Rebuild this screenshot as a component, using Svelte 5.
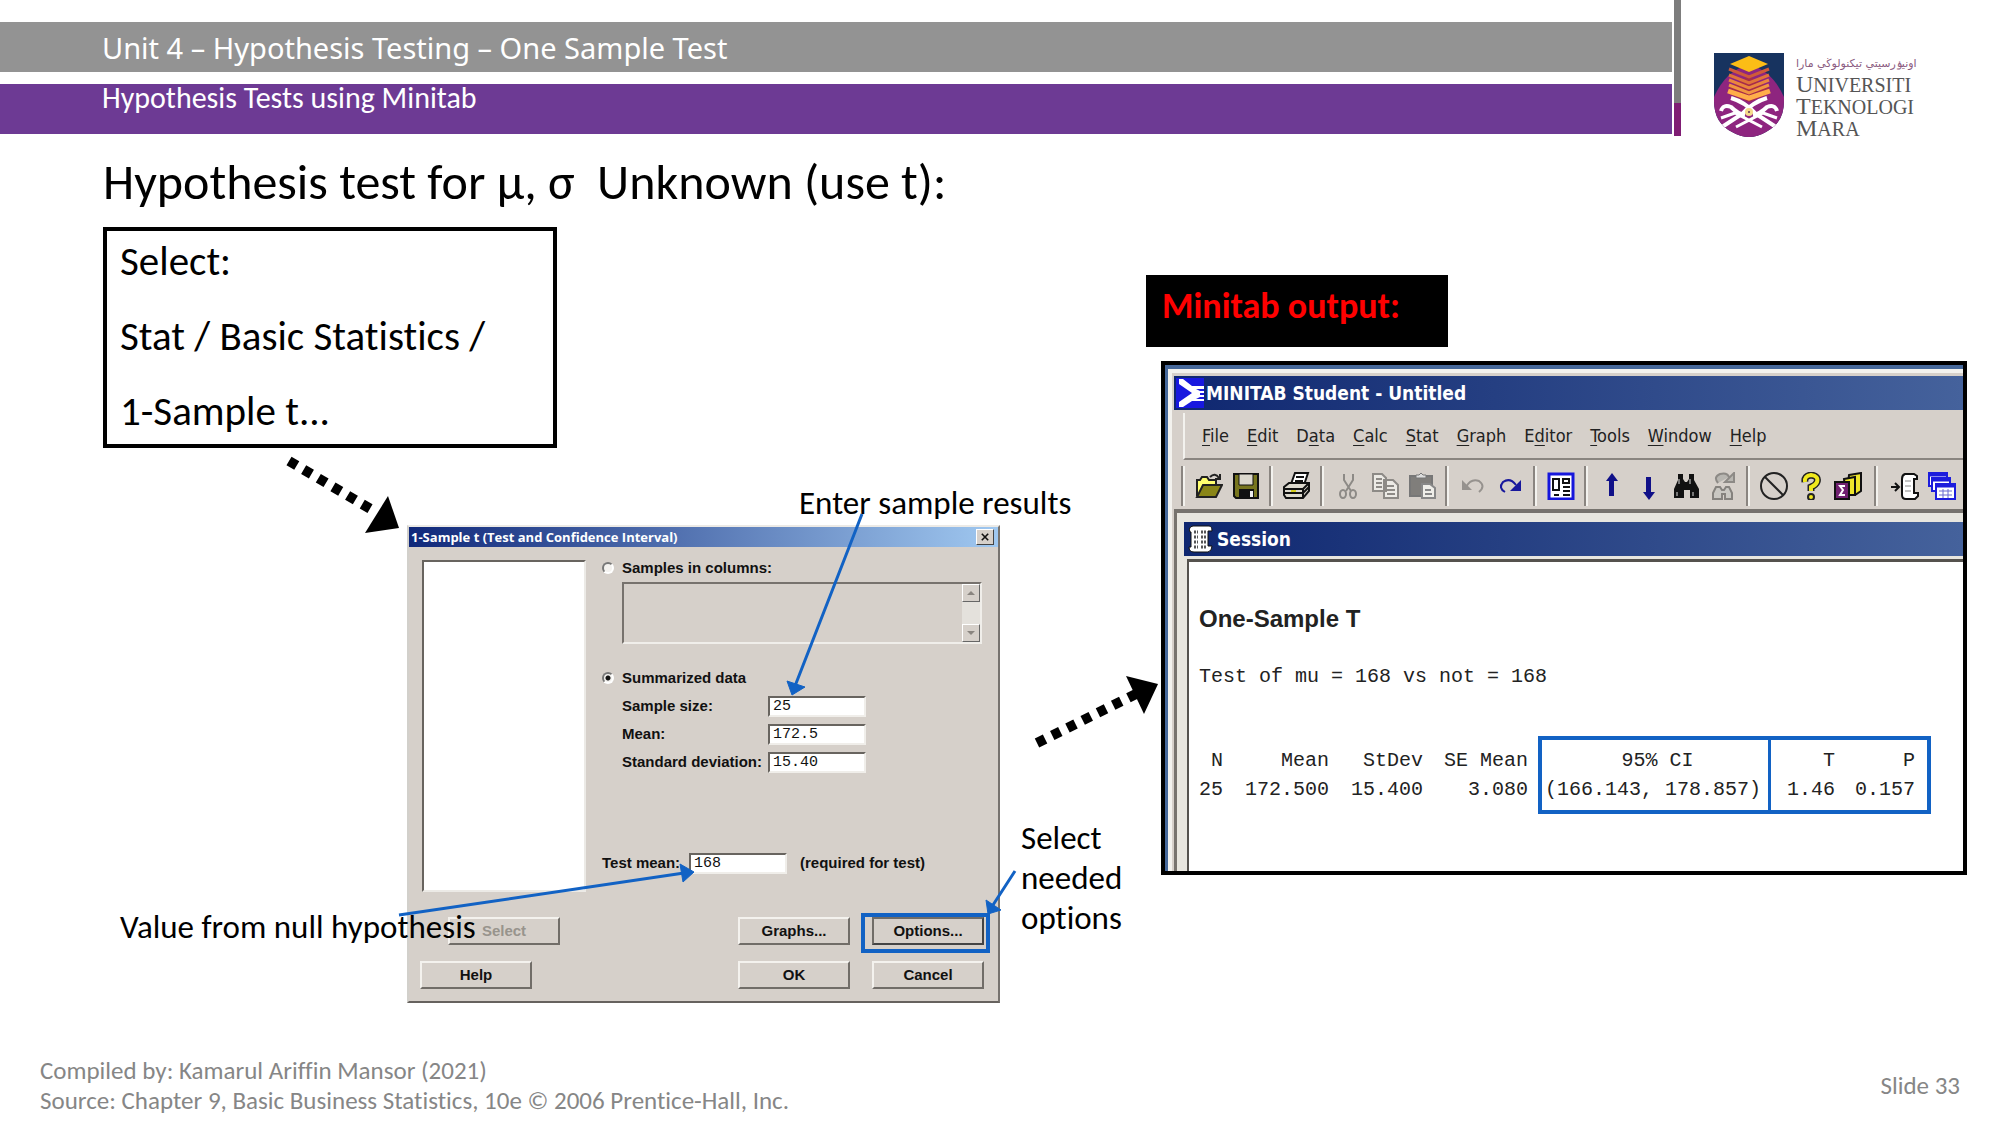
<script>
  const menus = [
    ['', 'F', 'ile'], ['', 'E', 'dit'], ['D', 'a', 'ta'], ['', 'C', 'alc'], ['', 'S', 'tat'],
    ['', 'G', 'raph'], ['E', 'd', 'itor'], ['', 'T', 'ools'], ['', 'W', 'indow'], ['', 'H', 'elp']
  ];
  const groups = [
    ['open', 'save'], ['print'], ['cut', 'copy', 'paste'], ['undo', 'redo'], ['project'],
    ['previous', 'next', 'find', 'replace'], ['cancel', 'help', 'guide'], ['session', 'worksheets']
  ];
  let mode = $state('summary');
  let size = $state('25');
  let mean = $state('172.5');
  let deviation = $state('15.40');
  let testMean = $state('168');
</script>

{#snippet icon(name)}
  <svg class="icon" viewBox="0 0 28 28" aria-hidden="true">
    {#if name === 'open'}
      <path d="M2 24V8h3l2-3h5l2 3h7v5" fill="#ffff70" stroke="#222" stroke-width="2" />
      <path d="M2 25l6-12h19l-6 12z" fill="#8a8618" stroke="#222" stroke-width="2" />
      <path d="M15 5q5-5 9 1M25 2v5h-5" fill="none" stroke="#222" stroke-width="2" />
    {:else if name === 'save'}
      <path d="M2 2h24v24H4l-2-2z" fill="#77751d" stroke="#111" stroke-width="2" />
      <path d="M7 2h14v11H7z" fill="#ddd9ce" stroke="#111" />
      <path d="M7 17h15v9H7z" fill="#111" />
      <path d="M18 19h3v6h-3z" fill="#eee" />
    {:else if name === 'print'}
      <path d="M8 12l4-11h13l-4 12" fill="#fff" stroke="#111" stroke-width="2" />
      <path d="M13 5h8M12 9h8" stroke="#111" stroke-width="2" />
      <path d="M1 15l5-4h20v8l-6 7H3l-2-3z" fill="#ddd9ce" stroke="#111" stroke-width="2" />
      <path d="M2 17h18l5-5M2 21h18l6-6M20 17v9" fill="none" stroke="#111" stroke-width="2" />
      <path d="M8 19h5" stroke="#d5cf20" stroke-width="2" />
    {:else if name === 'cut'}
      <path d="M10 2v6l7 11M19 2v6l-7 11" fill="none" stroke="#8d8a86" stroke-width="2" />
      <ellipse cx="9" cy="22" rx="3" ry="4" fill="none" stroke="#8d8a86" stroke-width="2" />
      <ellipse cx="19" cy="22" rx="3" ry="4" fill="none" stroke="#8d8a86" stroke-width="2" />
    {:else if name === 'copy'}
      <path d="M2 2h9l4 4v13H2zM13 8h9l5 5v13H13z" fill="#eceae5" stroke="#8d8a86" stroke-width="2" />
      <path d="M5 7h6M5 11h6M5 15h6M16 14h7M16 18h8M16 22h8" stroke="#8d8a86" stroke-width="2" />
    {:else if name === 'paste'}
      <path d="M2 4h22v20H2z" fill="#807e7b" stroke="#777" stroke-width="2" />
      <path d="M8 6V3h3l2-2 2 2h3v3z" fill="#ddd" stroke="#777" />
      <path d="M14 12h8l5 4v10H14z" fill="#efeee9" stroke="#888" stroke-width="2" />
      <path d="M17 18h6M17 22h7" stroke="#888" stroke-width="2" />
    {:else if name === 'undo'}
      <path d="M7 15q5-9 13-6 7 5 0 11" fill="none" stroke="#96928e" stroke-width="2" />
      <path d="M3 8v10h10z" fill="#96928e" />
    {:else if name === 'redo'}
      <path d="M9 20q-7-4-2-10 7-5 13 3" fill="none" stroke="#18189c" stroke-width="2" />
      <path d="M25 8v11H14z" fill="#18189c" />
    {:else if name === 'project'}
      <path d="M2 2h24v25H2z" fill="#fff" stroke="#1616dc" stroke-width="3" />
      <path d="M6 7h6v11H6zM16 7h6v4h-6z" fill="#fff" stroke="#111" stroke-width="2" />
      <path d="M16 15h7M16 19h7M7 23h5M16 23h7" stroke="#111" stroke-width="2" />
    {:else if name === 'previous'}
      <path d="M14 1l6 8h-4v15h-5V9H8z" fill="#101088" />
    {:else if name === 'next'}
      <path d="M14 28l6-8h-4V5h-5v15H8z" fill="#101088" />
    {:else if name === 'find'}
      <path d="M6 2h5v5l2 3h2l2-3V2h5v6l5 9v9h-9v-8h-6v8H2v-9l4-9z" fill="#111" />
      <path d="M7 7v5M18 7v5M5 20v4M21 20v4" stroke="#ddd" />
    {:else if name === 'replace'}
      <path d="M7 15h4l2 3h2l2-3h3l3 6v6h-7v-5h-3v5H4v-6z" fill="#c9c7c2" stroke="#85827e" stroke-width="2" />
      <path d="M9 11q-5-6 2-9 7-2 9 3M25 1v9h-9z" fill="#b8b6b1" stroke="#8d8a86" stroke-width="2" />
    {:else if name === 'cancel'}
      <circle cx="14" cy="14" r="13" fill="none" stroke="#222" stroke-width="2" />
      <path d="M5 5l18 18" stroke="#222" stroke-width="2" />
    {:else if name === 'help'}
      <path d="M8 10q-1-6 6-7 8 1 6 7-1 3-6 5v4" fill="none" stroke="#222" stroke-width="7" />
      <circle cx="14" cy="25" r="3" fill="#f0e91d" stroke="#222" stroke-width="2" />
      <path d="M8 10q-1-6 6-7 8 1 6 7-1 3-6 5v4" fill="none" stroke="#f0e91d" stroke-width="4" />
    {:else if name === 'guide'}
      <path d="M15 3l12-2v18l-6 4h-8z" fill="#eee62b" stroke="#111" stroke-width="2" />
      <path d="M10 7l11-2v18h-9z" fill="#eee62b" stroke="#111" stroke-width="2" />
      <path d="M1 10h14v17H1z" fill="#702070" stroke="#111" stroke-width="2" />
      <path d="M11 14H6l3 4-3 5h5" fill="none" stroke="#fff" stroke-width="2" />
    {:else if name === 'session'}
      <path d="M0 15h8M4 11l4 4-4 4" fill="none" stroke="#111" stroke-width="2" />
      <path d="M26 7V4l-3-2H14q-3 1-3 5v16q0 4 4 4h9l3-3v-3h-4V7z" fill="#fff" stroke="#111" stroke-width="2" />
      <path d="M14 9h6M14 14h6M14 19h6" stroke="#888" />
    {:else if name === 'worksheets'}
      <path d="M1 1h18v13H1z" fill="#fff" stroke="#1c1cdd" stroke-width="2" />
      <path d="M4 6h18v13H4z" fill="#fff" stroke="#1c1cdd" stroke-width="2" />
      <path d="M8 12h19v15H8z" fill="#fff" stroke="#1c1cdd" stroke-width="2" />
      <path d="M1 3h18M4 8h18M8 14h19" stroke="#1c1cdd" stroke-width="3" />
      <path d="M11 19h13M11 23h13M15 17v9M20 17v9" stroke="#6b6bd0" />
    {/if}
  </svg>
{/snippet}

<div class="slide">
  <header class="banner">
    <div class="bars">
      <div class="bar unit">Unit 4 – Hypothesis Testing – One Sample Test</div>
      <div class="bar topic">Hypothesis Tests using Minitab</div>
    </div>
    <div class="divider"></div>
    <div class="brand">
      <svg class="crest" viewBox="0 0 70 84" role="img" aria-label="University crest">
        <defs>
          <clipPath id="shield"><path d="M0 0h70v48q0 22-18 31-17 10-34 0Q0 70 0 48z" /></clipPath>
        </defs>
        <g clip-path="url(#shield)">
          <path d="M0 0h70v84H0z" fill="#17335f" />
          <path d="M35 12Q58 17 70 44v40H0V44Q12 17 35 12z" fill="#8e257f" />
          <path d="M15 35l20-12 20 12v6L35 49 15 41z" fill="#a72c4a" />
          <g fill="none" stroke-width="3">
            <path d="M15 16l20 8 20-8" stroke="#d05b38" />
            <path d="M15 22l20 8 20-8" stroke="#e0743a" />
            <path d="M15 27l20 8 20-8" stroke="#ea863d" />
            <path d="M15 32l20 8 20-8" stroke="#f19640" />
            <path d="M14 38l21 7 21-7" stroke="#ffae4a" stroke-width="5" />
          </g>
          <path d="M35 3l19 8-19 8-19-8z" fill="#fcbd16" />
          <g fill="none" stroke="#fff" stroke-width="4">
            <path d="M17 45q14 4 25 16l20 13" />
            <path d="M53 45q-14 4-25 16L8 74" />
            <path d="M7 58q2-7 10-4 7 7 14 8M63 58q-2-7-10-4-7 7-14 8" />
            <path d="M7 65l14-5 27 14M63 65l-14-5-27 14" stroke-width="3" />
          </g>
          <circle cx="35" cy="59" r="4" fill="#f5d98a" />
          <circle cx="35" cy="59" r="1" fill="#5b2b55" />
        </g>
      </svg>
      <div class="wordmark">
        <span class="jawi" dir="rtl" lang="ms-Arab">اونيۏرسيتي تيكنولوڬي مارا</span>
        <span>Universiti</span><span>Teknologi</span><span>Mara</span>
      </div>
    </div>
  </header>

  <main>
    <h1>Hypothesis test for μ, σ&nbsp; Unknown (use t):</h1>
    <div class="board">
      <section class="steps">
        <div class="path">
          <div>Select:</div>
          <div>Stat / Basic Statistics /</div>
          <div>1-Sample t...</div>
        </div>
        <p class="note enter">Enter sample results</p>
        <div class="stage">
          <form class="dialog" onsubmit={(e) => e.preventDefault()}>
            <div class="dialog-title">
              <span>1-Sample t (Test and Confidence Interval)</span>
              <button type="button" class="close" aria-label="Close">
                <svg viewBox="0 0 10 10"><path d="M1 1l8 8M9 1L1 9" stroke="#111" stroke-width="2" /></svg>
              </button>
            </div>
            <div class="dialog-body">
              <div class="upper">
                <div class="variables"></div>
                <div class="fields">
                  <label class="choice"><input type="radio" value="columns" bind:group={mode} />Samples in columns:</label>
                  <div class="columns">
                    <textarea aria-label="Samples in columns" disabled></textarea>
                    <div class="scroll">
                      <span><svg viewBox="0 0 10 6"><path d="M5 1l4 4H1z" fill="#8a8580" /></svg></span>
                      <span><svg viewBox="0 0 10 6"><path d="M5 5l4-4H1z" fill="#8a8580" /></svg></span>
                    </div>
                  </div>
                  <label class="choice summary"><input type="radio" value="summary" bind:group={mode} />Summarized data</label>
                  <div class="values">
                    <label for="size">Sample size:</label><input id="size" bind:value={size} />
                    <label for="mean">Mean:</label><input id="mean" bind:value={mean} />
                    <label for="sd">Standard deviation:</label><input id="sd" bind:value={deviation} />
                  </div>
                  <div class="test">
                    <label for="test">Test mean:</label>
                    <input id="test" bind:value={testMean} />
                    <span>(required for test)</span>
                  </div>
                </div>
              </div>
              <div class="actions">
                <button type="button" class="select" disabled>Select</button>
                <button type="button">Graphs...</button>
                <div class="marked"><button type="button">Options...</button></div>
              </div>
              <div class="actions last">
                <button type="button">Help</button>
                <button type="submit">OK</button>
                <button type="button">Cancel</button>
              </div>
            </div>
          </form>
          <p class="note options">Select needed options</p>
          <p class="note null">Value from null hypothesis</p>
        </div>
      </section>

      <section class="result">
        <h2>Minitab output:</h2>
        <div class="window">
          <div class="frame">
            <div class="window-title">
              <svg class="app" viewBox="0 0 28 30" aria-hidden="true">
                <path d="M0 0h28v30H0z" fill="#1818df" />
                <path d="M3 1h4l9 7h12v3h-8l4 2h4v2h-4v2h4v2h-4l-4 2h8v2H16l-9 6H3v-5l13-9L3 6z" fill="#fff" />
              </svg>
              <span>MINITAB Student - Untitled</span>
            </div>
            <nav class="menu">
              {#each menus as [before, key, after]}
                <button type="button">{before}<u>{key}</u>{after}</button>
              {/each}
            </nav>
            <div class="toolbar">
              {#each groups as group}
                <div class="group">
                  {#each group as name}
                    <button type="button" aria-label={name}>{@render icon(name)}</button>
                  {/each}
                </div>
              {/each}
            </div>
            <div class="child">
              <div class="window-title session">
                <svg class="app" viewBox="0 0 28 30" aria-hidden="true">
                  <path d="M4 8q-2-5 3-6h16q3 0 3 5h-4v15h4q0 5-4 6H8q-5 0-5-5h2V8z" fill="#fff" stroke="#111" />
                  <path d="M8 8h4M15 8h5M8 13h4M15 13h5M8 18h4M15 18h5M8 23h4M15 23h5" stroke="#555" stroke-width="3" stroke-dasharray="2 1" />
                </svg>
                <span>Session</span>
              </div>
              <div class="output">
                <h3>One-Sample T</h3>
                <p>Test of mu = 168 vs not = 168</p>
                <table>
                  <thead>
                    <tr><th class="n">N</th><th class="mean">Mean</th><th class="dev">StDev</th><th class="se">SE Mean</th><th class="ci">95% CI</th><th class="t">T</th><th class="p">P</th></tr>
                  </thead>
                  <tbody>
                    <tr><td>25</td><td>172.500</td><td>15.400</td><td class="se">3.080</td><td class="ci">(166.143, 178.857)</td><td class="t">1.46</td><td class="p">0.157</td></tr>
                  </tbody>
                </table>
              </div>
            </div>
          </div>
        </div>
      </section>
    </div>

    <svg class="arrows" aria-hidden="true">
      <g transform="translate(0 -136)">
        <path d="M289 461L374 511" stroke="#000" stroke-width="10" stroke-dasharray="9 8" />
        <path d="M388 496l11 32-34 5z" fill="#000" />
        <path d="M1037 743L1138 693" stroke="#000" stroke-width="10" stroke-dasharray="9 8" />
        <path d="M1126 676l32 8-14 30z" fill="#000" />
        <g stroke="#1262c4" stroke-width="3" fill="#1262c4">
          <path d="M862 514L795 686M399 915L684 873M1015 871L993 905" />
          <path d="M787 681l18 6-13 8zM680 864l3 18 11-10zM986 900l15 10-13 4z" stroke-width="1" />
        </g>
      </g>
    </svg>
  </main>

  <footer>
    <div>
      <div>Compiled by: Kamarul Ariffin Mansor (2021)</div>
      <div>Source: Chapter 9, Basic Business Statistics, 10e © 2006 Prentice-Hall, Inc.</div>
    </div>
    <div>Slide 33</div>
  </footer>
</div>

<style>
  :global(body) { background: #fff; }
  * { box-sizing: border-box; }
  h1, h2, h3, p { margin: 0; font-weight: 400; }
  button, input, textarea { font: inherit; color: inherit; margin: 0; padding: 0; border-radius: 0; }
  svg { display: block; }

  .slide { font-family: Carlito, Lato, sans-serif; color: #000; }
  .path, .note { font-variant-ligatures: none; }

  .banner { display: flex; height: 136px; }
  .bars { flex: 1; display: flex; flex-direction: column; gap: 12px; padding-top: 22px; }
  .bar { height: 50px; padding-left: 102px; color: #fff; }
  .unit { background: #939393; font-family: "Noto Sans", sans-serif; font-size: 29px; line-height: 52px; }
  .topic { background: #6d3a94; font-size: 30px; line-height: 28px; font-variant-ligatures: none; }
  .divider { width: 7px; margin-left: 2px; background: linear-gradient(#7d7d7d 103px, #7f1d74 103px); }
  .brand { width: 319px; padding: 53px 0 0 33px; display: flex; gap: 12px; }
  .crest { width: 70px; height: 84px; flex: none; }
  .wordmark { display: flex; flex-direction: column; font: 20px/21px "Liberation Serif", serif; text-transform: uppercase; color: #555; }
  .wordmark span::first-letter { font-size: 24px; line-height: 21px; }
  .wordmark .jawi { font: 11px/20px "DejaVu Sans", sans-serif; color: #8a5a80; white-space: nowrap; }
  .wordmark .jawi::first-letter { font-size: 11px; }

  main { position: relative; }
  h1 { padding-left: 103px; font-size: 50px; line-height: 92px; height: 91px; white-space: nowrap; }
  .board { display: flex; }
  .steps { width: 1146px; flex: none; }
  .path { width: 454px; margin-left: 103px; padding: 0 13px; border: 4px solid #000; font-size: 41px; line-height: 75px; }
  .path div:first-child { margin-top: -7px; }
  .path div:last-child { margin-bottom: -5px; }
  .note { font-size: 33px; line-height: 40px; white-space: nowrap; }
  .enter { margin: 35px 0 2px 799px; }
  .stage { display: flex; align-items: flex-end; position: relative; padding-left: 407px; }
  .options { width: 120px; margin: 0 0 65px 21px; white-space: normal; }
  .null { position: absolute; left: 120px; bottom: 56px; }

  .dialog { width: 593px; border: 2px solid; border-color: #eceae6 #77736f #66625e #d2d0cb; background: #d6d0ca; font: bold 15px/20px "Liberation Sans", sans-serif; color: #111; }
  .dialog-title { display: flex; justify-content: space-between; align-items: center; height: 20px; padding: 0 4px 0 2px; background: linear-gradient(90deg, #10287a, #a0c8f0); color: #fff; font: bold 13px/20px "Open Sans", sans-serif; }
  .close { width: 18px; height: 16px; padding: 3px 4px; background: #d6d0ca; border: 1px solid; border-color: #fff #444 #444 #fff; }
  .close svg { width: 8px; height: 8px; }
  .dialog-body { padding: 11px 14px 12px 11px; }
  .upper { display: flex; gap: 16px; }
  .variables { width: 164px; height: 332px; margin: 2px 0 0 2px; background: #fff; border: 2px solid; border-color: #68645f #eceae6 #eceae6 #68645f; }
  .fields { flex: 1; }
  .choice { display: flex; align-items: center; gap: 8px; }
  .choice input { appearance: none; width: 12px; height: 12px; border-radius: 50%; border: 2px solid; border-color: #777 #fff #fff #777; background: #f4f2ef; }
  .choice input:checked { background: radial-gradient(#111 2px, #f4f2ef 3px); }
  .columns { display: flex; height: 62px; margin: 4px 2px 24px 20px; border: 2px solid; border-color: #77726d #f0eeea #f0eeea #77726d; }
  .columns textarea { flex: 1; border: 0; background: #d6d0ca; resize: none; }
  .scroll { width: 18px; display: flex; flex-direction: column; justify-content: space-between; background: #e4e1dc; }
  .scroll span { height: 18px; padding: 5px 3px; background: #d6d0ca; border: 1px solid; border-color: #fff #666 #666 #fff; }
  .values { display: grid; grid-template-columns: 146px 98px; padding: 4px 0 0 20px; grid-auto-rows: 28px; align-items: center; white-space: nowrap; }
  .values input, .test input { width: 98px; height: 21px; padding-left: 3px; background: #fff; border: 2px solid; border-color: #68645f #f0eeea #f0eeea #68645f; font: 15px/17px "Liberation Mono", monospace; }
  .test { display: flex; align-items: center; height: 28px; margin-top: 73px; white-space: nowrap; }
  .test label { width: 87px; }
  .test span { margin-left: 13px; }
  .actions { display: flex; gap: 22px; margin-top: 25px; }
  .actions.last { margin-top: 16px; }
  .actions button { width: 112px; height: 28px; background: #d6d0ca; border: 2px solid; border-color: #f4f2ee #716d68 #716d68 #f4f2ee; }
  .actions > :first-child { margin-right: auto; }
  .actions .select { margin-left: 28px; color: #98948d; }
  .marked { position: relative; }
  .marked::after { content: ""; position: absolute; inset: -4px -6px -8px -11px; border: 4px solid #1262c4; pointer-events: none; }
  .marked button { border-color: #716d68 #444 #444 #716d68; }

  .result { flex: 1; padding: 48px 33px 0 0; }
  h2 { width: 302px; height: 72px; padding-left: 16px; background: #000; color: #f00; font-size: 36px; font-weight: 700; line-height: 62px; white-space: nowrap; font-variant-ligatures: none; }
  .window { margin: 14px 0 0 15px; border: 4px solid #000; background: #46689a; padding: 4px 0 0 3px; }
  .frame { background: #d6d0ca; border-top: 4px solid #f3f2ee; border-left: 4px solid #f3f2ee; padding: 3px 0 0 2px; }
  .window-title { display: flex; align-items: center; gap: 2px; height: 34px; padding-left: 2px; background: linear-gradient(90deg, #0f2770, #45629c); color: #fff; font: bold 19px/34px "DejaVu Sans Condensed", "Open Sans", sans-serif; }
  .app { width: 28px; height: 30px; }
  .menu { display: flex; gap: 18px; height: 47px; margin-top: 3px; padding-left: 17px; margin-left: 9px; border-left: 2px solid #f3f2ee; border-bottom: 2px solid #8a8580; font: 18px/40px "DejaVu Sans Condensed", "Open Sans", sans-serif; color: #222; }
  .menu button, .group button { background: none; border: 0; }
  .menu u { text-underline-offset: 3px; }
  .toolbar { display: flex; height: 46px; margin: 3px 0 0 9px; align-items: center; }
  .group { display: flex; gap: 9px; height: 40px; align-items: center; padding: 0 11px 0 10px; border-left: 2px solid #f3f2ee; box-shadow: -2px 0 #8a8580; }
  .group:last-child { padding: 0 0 0 13px; margin-left: 3px; }
  .icon { width: 28px; height: 28px; }
  .child { border-top: 4px solid #77736e; border-left: 3px solid #77736e; padding: 9px 0 0 7px; background: #e8e6df; }
  .window-title.session { gap: 3px; }
  .output { margin: 3px 0 0 3px; padding: 43px 10px 0 10px; height: 312px; background: #fff; border-top: 3px solid #55524e; border-left: 2px solid #55524e; font: 20px/28px "Liberation Mono", monospace; color: #222; }
  h3 { font: bold 24px/28px "Liberation Sans", sans-serif; }
  .output p { margin-top: 30px; }
  table { border-collapse: separate; border-spacing: 0; table-layout: fixed; width: 732px; margin-top: 45px; }
  th, td { font-weight: 400; text-align: right; padding: 0; white-space: nowrap; }
  th { height: 40px; padding-top: 9px; }
  td { height: 38px; padding-bottom: 10px; }
  .n { width: 24px; }
  .mean { width: 106px; }
  .dev { width: 94px; }
  .se { width: 115px; padding-right: 10px; }
  .ci { width: 230px; padding-right: 7px; border-left: 4px solid #1262c4; }
  th.ci { text-align: center; padding-left: 5px; padding-right: 0; }
  .t { width: 67px; border-left: 3px solid #1262c4; }
  .p { width: 96px; padding-right: 12px; border-right: 4px solid #1262c4; }
  th.ci, th.t, th.p { border-top: 4px solid #1262c4; padding-top: 5px; }
  td.ci, td.t, td.p { border-bottom: 4px solid #1262c4; padding-bottom: 6px; }

  .arrows { position: absolute; inset: 0; width: 100%; height: 100%; overflow: visible; pointer-events: none; }
  footer { display: flex; justify-content: space-between; align-items: center; padding: 53px 40px 9px; font-size: 25px; line-height: 30px; color: #868686; font-variant-ligatures: none; }
</style>
